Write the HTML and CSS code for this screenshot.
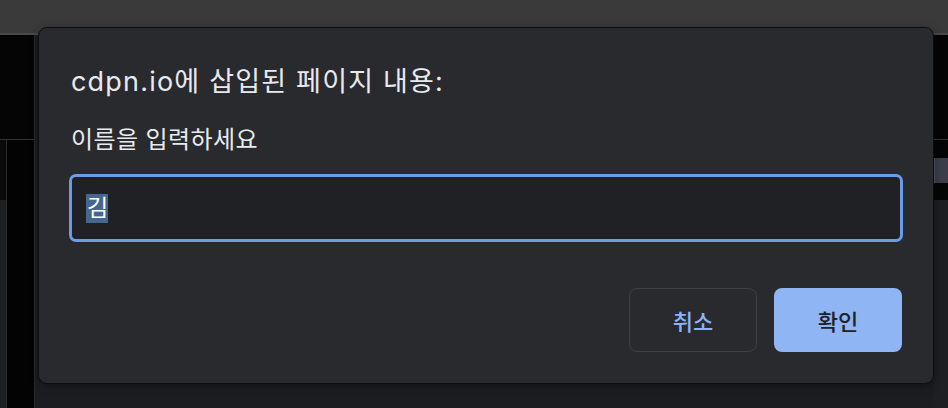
FILE: index.html
```html
<!DOCTYPE html>
<html lang="ko">
<head>
  <meta charset="UTF-8">
  <meta name="viewport" content="width=device-width, initial-scale=1">
  <title>cdpn.io</title>
  <link rel="stylesheet" href="styles.css">
</head>
<body>
  <div class="page">
    <div class="topbar"></div>
    <div class="main">
      <div class="side-left">
        <div class="side-top"></div>
        <div class="side-bottom">
          <div class="rail"></div>
          <div class="rail-black"></div>
        </div>
      </div>
      <div class="content"></div>
      <div class="side-right">
        <div class="side-top"></div>
        <div class="right-bottom">
          <div class="chip"></div>
          <div class="right-fill"></div>
        </div>
      </div>
    </div>
  </div>

  <!-- prompt 대화상자 -->
  <div class="dialog">
    <h2 class="dialog-title">cdpn.io에 삽입된 페이지 내용:</h2>
    <p class="dialog-msg">이름을 입력하세요</p>
    <div class="prompt-input"><span class="sel">김</span></div>
    <div class="actions">
      <button class="btn btn-cancel">취소</button>
      <button class="btn btn-ok">확인</button>
    </div>
  </div>
</body>
</html>
```

FILE: styles.css
```css
* {
  box-sizing: border-box;
}

html, body {
  margin: 0;
  height: 100%;
}

body {
  font-family: "Inter", "Noto Sans CJK KR", sans-serif;
  background: #050505;
  color: #e8eaed;
  overflow: hidden;
}

.page {
  display: flex;
  flex-direction: column;
  height: 100vh;
}

.topbar {
  height: 35px;
  background: #3a3a3a;
  border-bottom: 2px solid #4a4a4a;
}

.main {
  flex: 1;
  display: flex;
}

.side-left {
  width: 35px;
  display: flex;
  flex-direction: column;
  border-right: 1px solid #2c2c2f;
}

.side-top {
  height: 105px;
  background: #050505;
  border-bottom: 1px solid #333;
}

.side-bottom {
  flex: 1;
  display: flex;
}

.rail {
  width: 7px;
  background: linear-gradient(#0a0a0a 0, #0a0a0a 60px, #1e1f22 60px);
  border-right: 1px solid #2a2a2c;
}

.rail-black {
  flex: 1;
  background: #030303;
}

.content {
  flex: 1;
  background: #1c1d21;
}

.side-right {
  width: 14px;
  display: flex;
  flex-direction: column;
}

.right-bottom {
  flex: 1;
  display: flex;
  flex-direction: column;
  padding-top: 18px;
  background: #050505;
}

.chip {
  height: 25px;
  background: #3c3d4b;
  border-left: 1px solid #55566a;
}

.right-fill {
  flex: 1;
  margin-top: 17px;
  background: #1e1f22;
}

.dialog {
  position: absolute;
  left: 38px;
  top: 27px;
  width: 896px;
  height: 357px;
  background: #292a2e;
  border: 1px solid #0e0e10;
  border-radius: 9px;
  padding: 0 30px 0 30px;
  box-shadow: 0 2px 8px rgba(0, 0, 0, 0.4);
}

.dialog-title {
  margin: 37px 0 0 2px;
  font-size: 27px;
  line-height: 33px;
  font-weight: 400;
  letter-spacing: 1.2px;
}

.dialog-msg {
  margin: 27px 0 0 2px;
  font-size: 24px;
  line-height: 30px;
  letter-spacing: 0.4px;
}

.prompt-input {
  margin-top: 19px;
  height: 68px;
  border: 3px solid #6c9ce8;
  border-radius: 7px;
  background: #202124;
  padding-left: 14px;
  display: flex;
  align-items: center;
}

.sel {
  background: #46678d;
  color: #fff;
  font-size: 23px;
  line-height: 29px;
  padding: 0 0 0 1px;
}

.actions {
  margin-top: 46px;
  display: flex;
  justify-content: flex-end;
  gap: 17px;
  padding-right: 1px;
}

.btn {
  width: 128px;
  height: 64px;
  border-radius: 8px;
  font-family: "Inter", "Noto Sans CJK KR", sans-serif;
  font-size: 22px;
  font-weight: 500;
  cursor: pointer;
}

.btn-cancel {
  background: transparent;
  border: 1px solid #3e4046;
  color: #8ab4f8;
}

.btn-ok {
  background: #8fb5f4;
  border: none;
  color: #202124;
}
```
